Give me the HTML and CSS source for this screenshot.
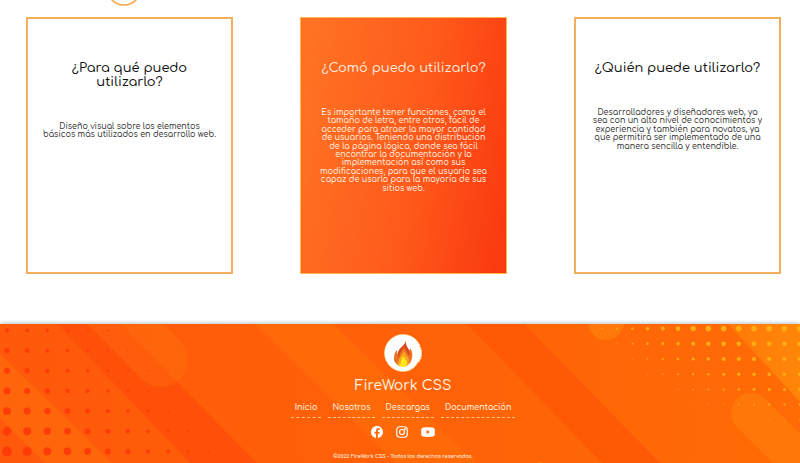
FILE: index.html
```html
<!DOCTYPE html>
<html lang="es">
<head>
<meta charset="utf-8">
<meta name="viewport" content="width=device-width, initial-scale=1">
<title>FireWork CSS</title>
<link rel="stylesheet" href="styles.css">
</head>
<body>
<main>
  <div class="step">
    <svg class="step-ring" width="36" height="36" viewBox="0 0 36 36" aria-hidden="true"><circle cx="18" cy="18" r="17" fill="none" stroke="#f3a548" stroke-width="1.6"/><circle cx="18" cy="18" r="14" fill="#fffaf5"/></svg>
  </div>
  <section class="cards">
    <article class="card">
      <h2>¿Para qué puedo<br>utilizarlo?</h2>
      <p>Diseño visual sobre los elementos<br>básicos más utilizados en desarrollo web.</p>
    </article>
    <article class="card card-active">
      <h2>¿Comó puedo utilizarlo?</h2>
      <p>Es importante tener funciones, como el<br>tamaño de letra, entre otros, fácil de<br>acceder para atraer la mayor cantidad<br>de usuarios. Teniendo una distribución<br>de la página lógica, donde sea fácil<br>encontrar la documentación y la<br>implementación así como sus<br>modificaciones, para que el usuario sea<br>capaz de usarlo para la mayoría de sus<br>sitios web.</p>
    </article>
    <article class="card">
      <h2>¿Quién puede utilizarlo?</h2>
      <p>Desarrolladores y diseñadores web, ya<br>sea con un alto nivel de conocimientos y<br>experiencia y también para novatos, ya<br>que permitirá ser implementado de una<br>manera sencilla y entendible.</p>
    </article>
  </section>
</main>
<footer class="footer">
  <svg class="footer-art" viewBox="0 0 800 139" preserveAspectRatio="xMidYMin slice" aria-hidden="true">
    <defs>
      <linearGradient id="base" x1="0" x2="1"><stop offset="0" stop-color="#ff590b"/><stop offset=".45" stop-color="#ff6008"/><stop offset="1" stop-color="#ff6b06"/></linearGradient>
      <linearGradient id="corner" x1="0" x2="1"><stop offset="0" stop-color="#ff7908"/><stop offset="1" stop-color="#ff8609"/></linearGradient>
    </defs>
    <rect width="800" height="139" fill="url(#base)"/>
    <path d="M0 30L112 139H45L0 94Z" fill="#ff650a"/>
    <path d="M57 0H120L257 139H190Z" fill="#ff5009"/>
    <path d="M86 -40L161 36" stroke="#ff7a10" stroke-opacity=".32" stroke-width="54" stroke-linecap="round"/>
    <path d="M255 0H333L476 139H396Z" fill="#ff6908"/>
    <path d="M467 0H524L660 139H602Z" fill="#ff5905"/>
    <circle cx="606" cy="-2" r="18" fill="#ff780a"/>
    <path d="M728 0H800V78Z" fill="url(#corner)"/>
    <path d="M751 89L850 188" stroke="#ff7708" stroke-width="40" stroke-linecap="round"/>
    <circle cx="540" cy="145" r="7" fill="#ff7d0a"/>
    <g id="dots-left" fill="#ff3c08"></g>
    <g id="dots-right" fill="#ffac14"></g>
  </svg>
  <div class="footer-body">
    <svg class="logo" width="38" height="38" viewBox="0 0 38 38" role="img" aria-label="Logo FireWork">
      <path d="M19 .5C26 .5 32 4 35 10l1 1-.5 2 1.500.5-.5 2 1.200.5-.7 2 1.200.5-1 2 .8 1-1.300 1.500.6 1.500-1.600 1-.2 2-1.500.5C31 34 25.500 37.500 19 37.500A18.500 18.500 0 0 1 19 .5Z" fill="#fff" stroke="#ffe7a4" stroke-width=".6"/>
      <path d="M22 7c-1 3 1 6 3 9 1 1 1-1 1-2 2 3 3 6 2 10-1 5-4 8-9 9-5-1-9-4-9-9 0-4 1-6 3-8 0 2 0 3 1 4 0-6 6-7 8-13Z" fill="#ed7422"/>
      <path d="M22 7c-1 3 1 6 3 9 1 3 1 4 0 6-2-4-4-6-5-9-2 4-5 6-5 12-1-2-1-3-1-5 0-6 6-7 8-13ZM10 23c1 4 3 6 6 8-3-1-6-4-6-8Z" fill="#d9481f"/>
      <path d="M20 16c0 4 5 6 5 11 0 3-2 5-6 6-4-1-6-3-6-6 1 1 1 1 2 1-1-5 4-7 5-12Z" fill="#f9a51d"/>
      <path d="M19 22c1 2 4 4 4 7s-2 4-4 4-4-1-4-4c1 1 1 1 2 1-1-3 1-5 2-8Z" fill="#ffe818"/>
    </svg>
    <h1>FireWork CSS</h1>
    <nav class="links">
      <a href="#inicio">Inicio</a>
      <a href="#nosotros">Nosotros</a>
      <a href="#descargas">Descargas</a>
      <a href="#documentacion">Documentación</a>
    </nav>
    <div class="social">
      <a href="#facebook" aria-label="Facebook"><svg width="12" height="12" viewBox="0 0 24 24"><path fill="#fff" d="M24 12.070C24 5.400 18.630 0 12 0S0 5.400 0 12.070c0 6.030 4.390 11.020 10.130 11.930v-8.440H7.080v-3.490h3.050V9.410c0-3.020 1.790-4.690 4.530-4.690 1.310 0 2.690.24 2.690.24v2.970h-1.520c-1.490 0-1.950.93-1.950 1.880v2.260h3.320l-.53 3.490h-2.790V24C19.610 23.090 24 18.100 24 12.070Z"/></svg></a>
      <a href="#instagram" aria-label="Instagram"><svg width="12" height="12" viewBox="0 0 24 24" fill="none" stroke="#fff" stroke-width="2.400"><rect x="1.500" y="1.500" width="21" height="21" rx="6"/><circle cx="12" cy="12" r="5"/><circle cx="18" cy="6" r=".8"/></svg></a>
      <a href="#youtube" aria-label="YouTube"><svg width="14" height="12" viewBox="0 0 28 24"><path fill="#fff" fill-rule="evenodd" d="M4 3Q14 1.500 24 3Q27 3.500 27.500 7Q28 12 27.500 17Q27 20.500 24 21Q14 22.500 4 21Q1 20.500 .5 17Q0 12 .5 7Q1 3.500 4 3ZM11 8V16L18 12Z"/></svg></a>
    </div>
    <p class="copy">©2022 FireWork CSS - Todos los derechos reservados.</p>
  </div>
</footer>
<script src="dots.js"></script>
</body>
</html>
```
FILE: styles.css
```css
* { box-sizing: border-box; }

body {
  margin: 0;
  background: #fff;
  color: #111;
  font-family: Comfortaa, Inter, "Open Sans", sans-serif;
  font-feature-settings: "cv11";
}

h1, h2, p { margin: 0; font-weight: 500; }

.step {
  display: flex;
  align-items: flex-end;
  height: 6px;
  padding-left: 106px;
  overflow: hidden;
}

.step-ring { flex: none; }

.cards {
  display: grid;
  grid-template-columns: repeat(3, 1fr);
  gap: 67px;
  padding: 11px 19px 50px 26px;
}

.card {
  min-height: 257px;
  padding: 42px 8px 8px;
  border: 2px solid #f2ae5c;
  text-align: center;
  white-space: nowrap;
}

.card h2 {
  font-size: 13px;
  line-height: 14px;
}

.card p {
  margin-top: 34px;
  color: #333;
  font-size: 8px;
  line-height: 1.05;
}

.card-active {
  border: 1px solid #ffb650;
  padding: 43px 9px 9px;
  background: linear-gradient(100deg, #ff7424, #ff5a1b 55%, #fa3b10 95%);
}

.card-active h2, .card-active p { color: #ffeadc; }

.card-active p { font-weight: 600; }

.footer {
  position: relative;
  background: #ff5f09;
  box-shadow: 0 -1px 4px #b4c4cb;
  overflow: clip;
  overflow-clip-margin: 6px;
}

.footer-art {
  position: absolute;
  inset: 0;
  width: 100%;
  height: 100%;
}

.footer-body {
  position: relative;
  display: flex;
  flex-direction: column;
  align-items: center;
  padding: 10px 0 2px 6px;
  color: #fff3e0;
}

.logo { display: block; }

h1 {
  margin-top: 5px;
  font-size: 14px;
  line-height: 18px;
}

.links {
  display: flex;
  gap: 7px;
  margin-top: 7px;
}

.links a {
  padding: 0 4px 4px;
  border-bottom: 1px dashed #ffc08a;
  color: inherit;
  font-size: 8px;
  font-weight: 600;
  line-height: 11px;
  text-decoration: none;
}

.social {
  display: flex;
  gap: 13px;
  margin-top: 8px;
}

.social a, .social svg { display: block; }

.copy {
  margin-top: 15px;
  font-size: 5px;
  font-weight: 700;
  line-height: 8px;
}
```
FILE: dots.js
```js
const NS = "http://www.w3.org/2000/svg";

function dot(group, x, y, r) {
  if (r < 0.35) return;
  const c = document.createElementNS(NS, "circle");
  c.setAttribute("cx", x);
  c.setAttribute("cy", y);
  c.setAttribute("r", r);
  group.appendChild(c);
}

// Dots grow towards the bottom left corner.
const left = document.getElementById("dots-left");
[2.2, 2.6, 3, 3.4, 3.9, 4.4, 5].forEach((size, row) => {
  for (let col = 0; col < 12; col++) {
    dot(left, 7 + 20.15 * col, 6.5 + 20.15 * row, size * (1 - col / (8 + 0.75 * row)));
  }
});

// Dots grow towards the top right corner.
const right = document.getElementById("dots-right");
const starts = [0, 1, 2, 3, 4, 5, 7];
[2.8, 2.4, 2.1, 1.8, 1.5, 1.1, 0.7].forEach((size, row) => {
  for (let col = starts[row]; col < 14; col++) {
    dot(right, 602 + 15.2 * col, 4.6 + 15.2 * row, size * Math.min(1, (col - starts[row] + 2.5) / 9));
  }
});
```
